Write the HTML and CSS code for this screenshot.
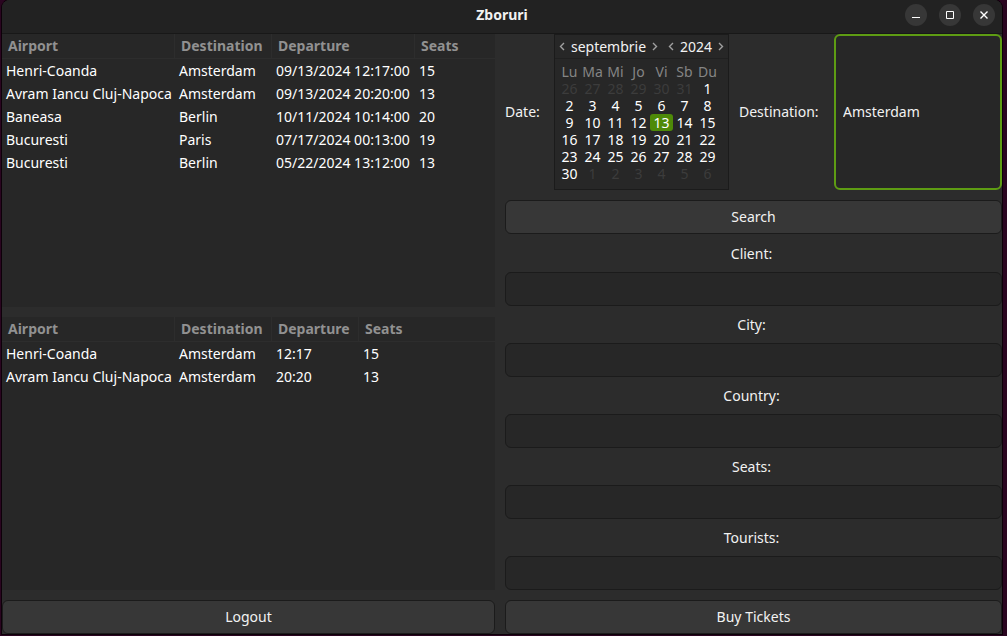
FILE: index.html
```html
<!DOCTYPE html>
<html lang="ro">
<head>
<meta charset="utf-8">
<title>Zboruri</title>
<link rel="stylesheet" href="styles.css">
</head>
<body>
<div class="window">
  <header class="titlebar">
    <h1 class="title">Zboruri</h1>
    <div class="controls">
      <button class="control" type="button" aria-label="Minimize"><svg width="22" height="22" viewBox="0 0 22 22"><path d="M7 13h8v1H7z" fill="#fff"/></svg></button>
      <button class="control" type="button" aria-label="Maximize"><svg width="22" height="22" viewBox="0 0 22 22"><path d="M7.5 7.5h7v7h-7z" fill="none" stroke="#fff"/></svg></button>
      <button class="control" type="button" aria-label="Close"><svg width="22" height="22" viewBox="0 0 22 22"><path d="M7.500 7.500l7 7M14.500 7.500l-7 7" fill="none" stroke="#fff" stroke-width="1.4"/></svg></button>
    </div>
  </header>
  <main class="content">
    <section class="left">
      <div class="pane">
        <table class="flights">
          <colgroup><col class="col-airport"><col class="col-destination"><col class="col-datetime"><col></colgroup>
          <thead><tr><th>Airport</th><th>Destination</th><th>Departure</th><th>Seats</th></tr></thead>
          <tbody>
            <tr><td>Henri-Coanda</td><td>Amsterdam</td><td>09/13/2024 12:17:00</td><td>15</td></tr>
            <tr><td>Avram Iancu Cluj-Napoca</td><td>Amsterdam</td><td>09/13/2024 20:20:00</td><td>13</td></tr>
            <tr><td>Baneasa</td><td>Berlin</td><td>10/11/2024 10:14:00</td><td>20</td></tr>
            <tr><td>Bucuresti</td><td>Paris</td><td>07/17/2024 00:13:00</td><td>19</td></tr>
            <tr><td>Bucuresti</td><td>Berlin</td><td>05/22/2024 13:12:00</td><td>13</td></tr>
          </tbody>
        </table>
      </div>
      <div class="pane">
        <table class="flights">
          <colgroup><col class="col-airport"><col class="col-destination"><col class="col-time"><col></colgroup>
          <thead><tr><th>Airport</th><th>Destination</th><th>Departure</th><th>Seats</th></tr></thead>
          <tbody>
            <tr><td>Henri-Coanda</td><td>Amsterdam</td><td>12:17</td><td>15</td></tr>
            <tr><td>Avram Iancu Cluj-Napoca</td><td>Amsterdam</td><td>20:20</td><td>13</td></tr>
          </tbody>
        </table>
      </div>
      <button class="button" type="button">Logout</button>
    </section>
    <form class="right">
      <div class="search-row">
        <span class="label" id="date-label">Date:</span>
        <div class="calendar" role="group" aria-labelledby="date-label">
          <div class="calendar-head">
            <button class="arrow" type="button" aria-label="Previous month"><svg width="6" height="9" viewBox="0 0 6 9"><path d="M5 1L1.500 4.500L5 8"/></svg></button>
            <span class="month">septembrie</span>
            <button class="arrow" type="button" aria-label="Next month"><svg width="6" height="9" viewBox="0 0 6 9"><path d="M1 1L4.500 4.500L1 8"/></svg></button>
            <button class="arrow arrow-year" type="button" aria-label="Previous year"><svg width="6" height="9" viewBox="0 0 6 9"><path d="M5 1L1.500 4.500L5 8"/></svg></button>
            <span class="year">2024</span>
            <button class="arrow" type="button" aria-label="Next year"><svg width="6" height="9" viewBox="0 0 6 9"><path d="M1 1L4.500 4.500L1 8"/></svg></button>
          </div>
          <table class="days">
            <thead><tr><th>Lu</th><th>Ma</th><th>Mi</th><th>Jo</th><th>Vi</th><th>Sb</th><th>Du</th></tr></thead>
            <tbody>
              <tr><td class="other">26</td><td class="other">27</td><td class="other">28</td><td class="other">29</td><td class="other">30</td><td class="other">31</td><td>1</td></tr>
              <tr><td>2</td><td>3</td><td>4</td><td>5</td><td>6</td><td>7</td><td>8</td></tr>
              <tr><td>9</td><td>10</td><td>11</td><td>12</td><td class="selected">13</td><td>14</td><td>15</td></tr>
              <tr><td>16</td><td>17</td><td>18</td><td>19</td><td>20</td><td>21</td><td>22</td></tr>
              <tr><td>23</td><td>24</td><td>25</td><td>26</td><td>27</td><td>28</td><td>29</td></tr>
              <tr><td>30</td><td class="other">1</td><td class="other">2</td><td class="other">3</td><td class="other">4</td><td class="other">5</td><td class="other">6</td></tr>
            </tbody>
          </table>
        </div>
        <label class="label" for="destination">Destination:</label>
        <input class="entry entry-focused" id="destination" type="text" value="Amsterdam">
      </div>
      <button class="button" type="button">Search</button>
      <div class="fields">
        <label class="label field-label" for="client">Client:</label>
        <input class="entry" id="client" type="text">
        <label class="label field-label" for="city">City:</label>
        <input class="entry" id="city" type="text">
        <label class="label field-label" for="country">Country:</label>
        <input class="entry" id="country" type="text">
        <label class="label field-label" for="seats">Seats:</label>
        <input class="entry" id="seats" type="text">
        <label class="label field-label" for="tourists">Tourists:</label>
        <input class="entry" id="tourists" type="text">
      </div>
      <button class="button" type="button">Buy Tickets</button>
    </form>
  </main>
</div>
</body>
</html>
```
FILE: styles.css
```css
* {
  box-sizing: border-box;
}

body {
  margin: 0;
  min-height: 100vh;
  padding: 0 5px 2px 2px;
  display: flex;
  background: #2a0520;
  color: #f2f2f2;
  font: 14px/17px "Noto Sans", sans-serif;
}

button,
input {
  font: inherit;
  color: inherit;
}

.window {
  flex: 1;
  min-width: 0;
  display: flex;
  flex-direction: column;
  background: #2c2c2c;
  border-radius: 8px 8px 0 0;
  box-shadow: 0 0 0 1px #0d0009;
}

.titlebar {
  display: grid;
  grid-template-columns: 1fr auto 1fr;
  height: 34px;
  padding: 0 7px 3px;
  align-items: center;
  background: #222;
  border-bottom: 1px solid #181818;
  border-radius: 8px 8px 0 0;
}

.title {
  grid-column: 2;
  margin: 0;
  padding-bottom: 2px;
  font-size: 14px;
  font-weight: 700;
}

.controls {
  display: flex;
  justify-content: flex-end;
  gap: 12px;
}

.control {
  width: 22px;
  height: 22px;
  padding: 0;
  border: 0;
  border-radius: 50%;
  background: #373737;
}

.control svg {
  display: block;
}

.content {
  flex: 1;
  display: grid;
  grid-template-columns: minmax(0, 493fr) minmax(0, 497fr);
  gap: 10px;
}

.left,
.right {
  display: flex;
  flex-direction: column;
  gap: 10px;
}

.pane {
  flex: 1;
  background: #272727;
}

.flights {
  width: 100%;
  table-layout: fixed;
  border-collapse: separate;
  border-spacing: 0;
  text-align: left;
  white-space: nowrap;
}

.col-airport {
  width: 173px;
}

.col-destination {
  width: 97px;
}

.col-datetime {
  width: 143px;
}

.col-time {
  width: 87px;
}

.flights th {
  height: 25px;
  padding: 0 0 2px 6px;
  border-right: 1px solid #2d2d2d;
  border-bottom: 1px solid #2d2d2d;
  color: #919191;
  font-weight: 700;
}

.flights th:last-child {
  border-right: 0;
}

.flights td {
  height: 23px;
  padding: 0 0 0 4px;
  color: #fff;
}

.button {
  height: 34px;
  padding: 0 16px 2px;
  background: #373737;
  border: 1px solid #1b1b1b;
  border-radius: 6px;
}

.entry {
  width: 100%;
  height: 34px;
  padding: 0 8px 2px;
  background: #272727;
  border: 1px solid #1b1b1b;
  border-radius: 6px;
  outline: 0;
}

.entry-focused {
  height: 100%;
  padding: 0 7px 2px;
  border: 2px solid #5e9c13;
}

.fields {
  flex: 1;
  display: flex;
  flex-direction: column;
  justify-content: flex-end;
  gap: 10px;
}

.field-label {
  padding-right: 4px;
  text-align: center;
}

.search-row {
  display: grid;
  grid-template-columns: 39px 175px 85px minmax(0, 1fr);
  gap: 10px;
  align-items: center;
}

.search-row .label {
  padding-bottom: 2px;
}

.calendar {
  background: #272727;
  border: 1px solid #1b1b1b;
  padding-bottom: 7px;
}

.calendar-head {
  display: flex;
  align-items: center;
  height: 24px;
  padding: 0 4px;
  border-bottom: 1px solid #202020;
}

.arrow {
  flex: none;
  width: 6px;
  height: 9px;
  padding: 0;
  border: 0;
  background: none;
}

.arrow svg {
  display: block;
  fill: none;
  stroke: #a0a0a0;
  stroke-width: 1.4;
}

.month {
  width: 87px;
  text-align: center;
}

.year {
  flex: 1;
  text-align: center;
}

.arrow-year {
  margin-left: 10px;
}

.days {
  margin: 4px 0 0 3px;
  table-layout: fixed;
  width: 161px;
  border-collapse: separate;
  border-spacing: 0;
  text-align: center;
}

.days th,
.days td {
  height: 17px;
  padding: 0;
}

.days th {
  color: #858585;
  font-weight: 400;
}

.days td {
  color: #fff;
}

.days .other {
  color: #3c3c3c;
}

.days .selected {
  background: #4e8a08;
  border-radius: 3px;
}
```
